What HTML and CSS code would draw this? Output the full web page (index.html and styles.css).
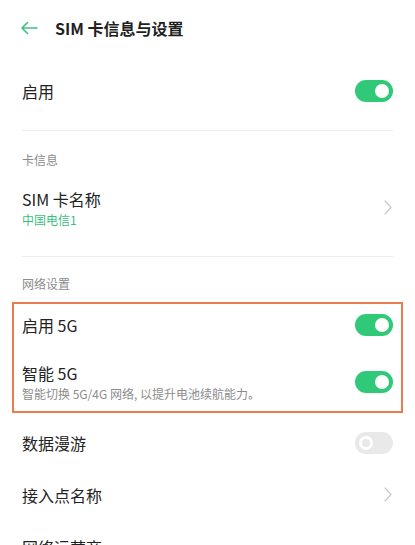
FILE: index.html
```html
<!DOCTYPE html>
<html lang="zh-CN">
<head>
<meta charset="utf-8">
<title>SIM 卡信息与设置</title>
<link rel="stylesheet" href="styles.css">
</head>
<body>
<div class="page">
  <header class="header">
    <svg class="back" width="18" height="14" viewBox="0 0 18 14"><path d="M17 7H2M7.5 1.5L2 7l5.5 5.5" fill="none" stroke="#3fc183" stroke-width="1.6" stroke-linecap="round" stroke-linejoin="round"/></svg>
    <h1 class="title">SIM 卡信息与设置</h1>
  </header>

  <div class="row row-first">
    <span class="label">启用</span>
    <span class="switch on"><span class="knob"></span></span>
  </div>
  <div class="divider"></div>

  <div class="group-title gt-card">卡信息</div>
  <div class="row row-sim">
    <div class="stack">
      <span class="label">SIM 卡名称</span>
      <span class="value">中国电信1</span>
    </div>
    <svg class="chev" width="8" height="15" viewBox="0 0 8 15"><path d="M1 1l6 6.5L1 14" fill="none" stroke="#c9c9c9" stroke-width="1.2" stroke-linecap="round" stroke-linejoin="round"/></svg>
  </div>
  <div class="divider"></div>

  <div class="group-title gt-net">网络设置</div>
  <div class="highlight">
    <div class="row row-5g">
      <span class="label">启用 5G</span>
      <span class="switch on"><span class="knob"></span></span>
    </div>
    <div class="row row-smart">
      <div class="stack">
        <span class="label">智能 5G</span>
        <span class="desc">智能切换 5G/4G 网络, 以提升电池续航能力。</span>
      </div>
      <span class="switch on"><span class="knob"></span></span>
    </div>
  </div>

  <div class="row row-list first-list">
    <span class="label">数据漫游</span>
    <span class="switch off"><span class="knob"></span></span>
  </div>
  <div class="row row-list">
    <span class="label">接入点名称</span>
    <svg class="chev" width="8" height="15" viewBox="0 0 8 15"><path d="M1 1l6 6.5L1 14" fill="none" stroke="#c9c9c9" stroke-width="1.2" stroke-linecap="round" stroke-linejoin="round"/></svg>
  </div>
  <div class="row row-list">
    <span class="label">网络运营商</span>
  </div>
</div>
</body>
</html>
```
FILE: styles.css
```css
* { box-sizing: border-box; }
html, body {
  margin: 0;
  padding: 0;
  background: #ffffff;
}
body {
  font-family: "Noto Sans CJK SC", "Noto Sans", sans-serif;
  color: #1f1f1f;
  width: 415px;
  height: 545px;
  overflow: hidden;
}
.page {
  display: flex;
  flex-direction: column;
}
.header {
  height: 56px;
  display: flex;
  align-items: center;
  padding-left: 20px;
}
.back {
  display: block;
  margin-right: 17px;
}
.title {
  margin: 0;
  font-size: 16px;
  font-weight: 600;
  line-height: 24px;
  color: #1f1f1f;
}
.row {
  display: flex;
  align-items: center;
  justify-content: space-between;
  padding: 0 22px;
}
.label {
  font-size: 16px;
  line-height: 24px;
  color: #222;
}
.row-first {
  height: 74px;
  padding-bottom: 4px;
}
.divider {
  height: 1px;
  background: #ececec;
  margin: 0 22px;
}
.group-title {
  font-size: 12px;
  line-height: 18px;
  color: #8c8c8c;
  padding: 0 22px;
}
.gt-card { padding-top: 20px; }
.gt-net { padding-top: 18px; }
.stack {
  display: flex;
  flex-direction: column;
}
.row-sim {
  padding-top: 18px;
  padding-bottom: 27px;
}
.value {
  font-size: 12px;
  line-height: 18px;
  color: #3dbf80;
}
.chev { display: block; margin-right: 1px; margin-top: -2px; }
.highlight {
  margin: 9px 12px 0 12px;
  border: 2px solid #ec7b51;
  height: 111px;
  display: flex;
  flex-direction: column;
}
.highlight .row {
  padding: 0 8px;
}
.row-5g {
  height: 42px;
}
.row-smart {
  flex: 1;
  padding-top: 6px !important;
}
.desc {
  font-size: 12px;
  line-height: 18px;
  color: #8c8c8c;
}
.row-list {
  height: 52px;
  flex-shrink: 0;
}
.first-list {
  margin-top: 4px;
}
.switch {
  position: relative;
  width: 38px;
  height: 22px;
  border-radius: 11px;
  flex-shrink: 0;
}
.switch.on { background: #2fc978; }
.switch.off { background: #e9e9e9; }
.knob {
  position: absolute;
  top: 4px;
  width: 14px;
  height: 14px;
  border-radius: 50%;
}
.switch.on .knob {
  right: 4px;
  background: #ffffff;
}
.switch.off .knob {
  left: 4px;
  border: 3px solid #ffffff;
  background: #e9e9e9;
}
```
